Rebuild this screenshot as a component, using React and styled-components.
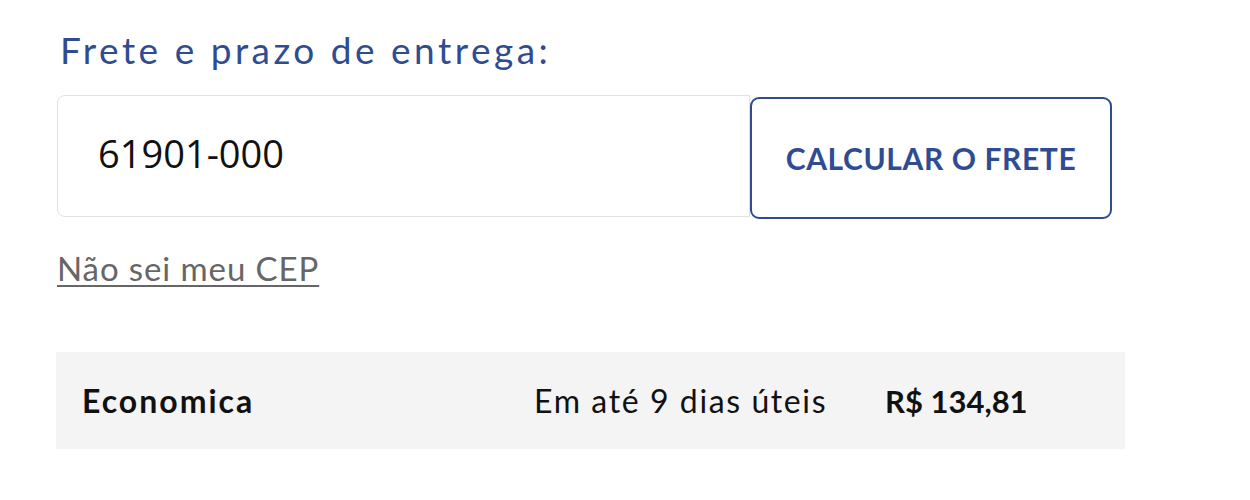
import React from 'react';
import styled, { createGlobalStyle } from 'styled-components';

const GlobalStyle = createGlobalStyle`
  body {
    margin: 0;
    background: #ffffff;
    font-family: Lato, "Noto Sans", sans-serif;
  }
`;

const Wrapper = styled.div`
  padding: 25px 0 0 56px;
  width: 1069px;
`;

const Title = styled.h2`
  margin: 0 0 20px 4px;
  font-size: 37px;
  font-weight: 400;
  letter-spacing: 3.5px;
  line-height: 50px;
  color: #2f4c93;
`;

const Form = styled.div`
  display: flex;
  align-items: flex-start;
  width: 1056px;
`;

const CepInput = styled.input`
  box-sizing: border-box;
  width: 693px;
  height: 122px;
  margin: 0 0 0 1px;
  padding: 0 0 6px 40px;
  border: 1px solid #e2e2e2;
  border-radius: 8px 0 0 8px;
  font-family: "Open Sans", sans-serif;
  font-size: 38px;
  color: #111;
  outline: none;
`;

const CalcButton = styled.button`
  box-sizing: border-box;
  width: 362px;
  height: 122px;
  margin-top: 2px;
  border: 2px solid #2f4c93;
  border-radius: 9px;
  background: #fff;
  color: #2f4c93;
  font-family: Lato, sans-serif;
  font-weight: 700;
  font-size: 30px;
  letter-spacing: 0.6px;
  cursor: pointer;
`;

const HelpLink = styled.a`
  display: inline-block;
  margin: 29px 0 0 1px;
  font-size: 33px;
  letter-spacing: 0.9px;
  color: #666;
  text-decoration: underline;
  text-underline-offset: 4px;
  text-decoration-thickness: 2px;
`;

const Option = styled.div`
  display: grid;
  grid-template-columns: 452px 351px auto;
  align-items: center;
  height: 97px;
  margin-top: 64px;
  padding-left: 26px;
  background: #f4f4f4;
  color: #111;
  font-size: 32px;
`;

const Cell = styled.span`
  font-weight: ${(p) => (p.$bold ? 700 : 400)};
  font-size: ${(p) => p.$size || 32}px;
  letter-spacing: ${(p) => p.$spacing || 0}px;
`;

const shipping = [
  { name: 'Economica', term: 'Em até 9 dias úteis', price: 'R$ 134,81' },
];

export default function App() {
  return (
    <Wrapper>
      <GlobalStyle />
      <Title>Frete e prazo de entrega:</Title>
      <Form>
        <CepInput defaultValue="61901-000" />
        <CalcButton>CALCULAR O FRETE</CalcButton>
      </Form>
      <HelpLink href="#">Não sei meu CEP</HelpLink>
      {shipping.map((s) => (
        <Option key={s.name}>
          <Cell $bold $spacing={2}>{s.name}</Cell>
          <Cell $spacing={1.6}>{s.term}</Cell>
          <Cell $bold $size={31}>{s.price}</Cell>
        </Option>
      ))}
    </Wrapper>
  );
}
